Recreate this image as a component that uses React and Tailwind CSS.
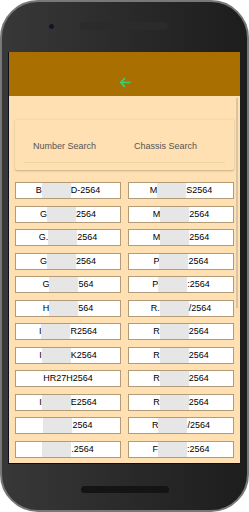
import React from "react";

const LEFT = [
  ["B", "D-2564"],
  ["G", "2564"],
  ["G.", "2564"],
  ["G", "2564"],
  ["G", "564"],
  ["H", "564"],
  ["I", "R2564"],
  ["I", "K2564"],
  ["HR27H2564", null],
  ["I", "E2564"],
  ["", "2564"],
  ["", ".2564"],
];

const RIGHT = [
  ["M", "S2564"],
  ["M", "2564"],
  ["M", "2564"],
  ["P", "2564"],
  ["P", ":2564"],
  ["R.", "/2564"],
  ["R", "2564"],
  ["R", "2564"],
  ["R", "2564"],
  ["R", "2564"],
  ["R", "/2564"],
  ["F", ":2564"],
];

function Plate({ p, s }) {
  return (
    <div className="h-[17px] bg-white border border-[#b39b77] flex items-center justify-center text-[9px] leading-none text-black">
      {s === null ? (
        <span>{p}</span>
      ) : (
        <>
          <span>{p}</span>
          <span className="w-[29px] h-[15px] bg-[#e6e6e6]"></span>
          <span>{s}</span>
        </>
      )}
    </div>
  );
}

export default function App() {
  const rows = LEFT.map((l, i) => [l, RIGHT[i]]);
  return (
    <div
      className="w-[249px] h-[512px] bg-white"
      style={{ fontFamily: '"Liberation Sans", Arial, sans-serif' }}
    >
      <div className="w-[249px] h-[512px] rounded-[38px] border-2 border-[#787878] bg-gradient-to-r from-[#383838] to-[#1d1d1d] flex flex-col overflow-hidden">
        {/* top bezel */}
        <div className="h-[50px] flex items-start pt-[20px] pl-[47px]">
          <div className="w-[5px] h-[5px] rounded-full bg-[#15152a] mt-[2px]"></div>
          <div className="ml-[26px] w-[88px] h-[8px] rounded-full bg-[#2b2b2b]"></div>
        </div>
        {/* screen */}
        <div className="ml-[6px] mr-[7px] h-[412px] border-l border-b border-[#0e0e1c] flex flex-col">
          <div className="h-[44px] bg-[#a96f00] flex items-end justify-center pb-[8px]">
            <svg width="12" height="11" viewBox="0 0 12 11" fill="none">
              <path d="M11.5 5.5H1.8M6 1.2L1.8 5.5L6 9.8" stroke="#33d17a" strokeWidth="1.7" />
            </svg>
          </div>
          <div className="relative flex-1 bg-[#ffe0b2] px-[6px] pt-[23px]">
            <div className="absolute left-[227px] top-[2px] w-[2px] h-[210px] bg-[#d6c5a6]"></div>
            <div className="h-[51px] bg-[#ffe0b2] rounded-[2px] shadow-[0_1px_2px_rgba(0,0,0,0.22)] border-t border-[#f7d8aa] flex flex-col">
              <div className="flex pt-[20px] -ml-[1px] text-[9px] leading-[12px] text-[#555]">
                <div className="w-[101px] text-center">Number Search</div>
                <div className="w-[101px] text-center">Chassis Search</div>
              </div>
              <div className="mt-[10px] ml-[9px] mr-[9px] h-px bg-[#f2d3a4]"></div>
            </div>
            <div className="mt-[12px] grid grid-cols-2 gap-x-[7px] gap-y-[6.5px]">
              {rows.map(([l, r], i) => (
                <React.Fragment key={i}>
                  <Plate p={l[0]} s={l[1]} />
                  <Plate p={r[0]} s={r[1]} />
                </React.Fragment>
              ))}
            </div>
          </div>
        </div>
        {/* bottom bezel */}
        <div className="flex-1 flex justify-center pt-[22px]">
          <div className="w-[88px] h-[7px] rounded-full bg-[#141414]"></div>
        </div>
      </div>
    </div>
  );
}
